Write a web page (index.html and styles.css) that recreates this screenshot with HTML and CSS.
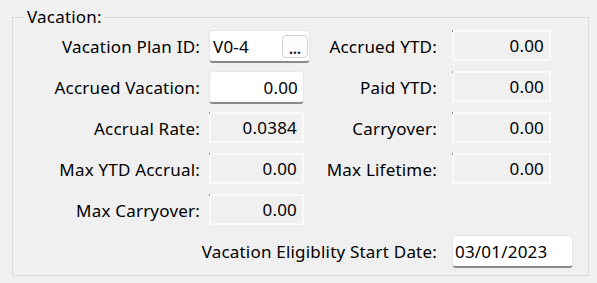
FILE: index.html
```html
<!DOCTYPE html>
<html lang="en">
<head>
    <meta charset="UTF-8" />
    <title>Vacation</title>
    <link rel="stylesheet" href="styles.css">
</head>
<body>
<fieldset class="group">
    <legend>Vacation:</legend>
    <div class="grid">
        <label class="lbl">Vacation Plan ID:</label>
        <div class="edit plan">
            <span>V0-4</span>
            <button class="dots" type="button">...</button>
        </div>
        <label class="lbl right">Accrued YTD:</label>
        <div class="ro">0.00</div>

        <label class="lbl">Accrued Vacation:</label>
        <div class="edit num">0.00</div>
        <label class="lbl right">Paid YTD:</label>
        <div class="ro">0.00</div>

        <label class="lbl">Accrual Rate:</label>
        <div class="ro">0.0384</div>
        <label class="lbl right">Carryover:</label>
        <div class="ro">0.00</div>

        <label class="lbl">Max YTD Accrual:</label>
        <div class="ro">0.00</div>
        <label class="lbl right">Max Lifetime:</label>
        <div class="ro">0.00</div>

        <label class="lbl">Max Carryover:</label>
        <div class="ro">0.00</div>
        <div></div>
        <div></div>

        <label class="lbl right wide">Vacation Eligiblity Start Date:</label>
        <div class="edit date">03/01/2023</div>
    </div>
</fieldset>
</body>
</html>
```

FILE: styles.css
```css
* {
    box-sizing: border-box;
}

body {
    margin: 0;
    background: #f0f0f0;
    font-family: 'Noto Sans', 'Open Sans', sans-serif;
    font-size: 17px;
    letter-spacing: 0.2px;
    color: #000;
}

.group {
    margin: 5px 0 0 12px;
    width: 577px;
    height: 271px;
    padding: 0;
    border: 1px solid #dcdcdc;
    border-radius: 0;
}

.group legend {
    margin-left: 11px;
    padding: 0 2px 0 3px;
    line-height: 24px;
}

.grid {
    display: grid;
    grid-template-columns: 187px 100px 125px 99px;
    grid-auto-rows: 32px;
    column-gap: 9px;
    row-gap: 9px;
    margin-top: 1px;
}

.lbl {
    display: flex;
    align-items: center;
    justify-content: flex-end;
    white-space: nowrap;
}

.lbl.right {
    padding-right: 6px;
}

.lbl.wide {
    grid-column: 1 / 4;
}

/* editable text boxes */
.edit {
    display: flex;
    align-items: center;
    background: #fff;
    border: 1px solid #e6e6e6;
    border-bottom: 2px solid #8a8a8a;
    border-radius: 4px;
    height: 33px;
}

.edit.num {
    justify-content: flex-end;
    width: 95px;
    padding-right: 5px;
}

.plan {
    width: 101px;
    padding-left: 3px;
    justify-content: space-between;
    padding-right: 1px;
}

.date {
    width: 121px;
    padding-left: 2px;
}

.dots {
    display: flex;
    align-items: flex-end;
    justify-content: center;
    width: 26px;
    height: 23px;
    padding: 0 0 3px;
    margin-top: 1px;
    border: 1px solid #d0d0d0;
    border-radius: 4px;
    background: #fdfdfd;
    font-family: inherit;
    font-size: 14px;
    line-height: 10px;
    font-weight: 700;
    color: #222;
    letter-spacing: 0;
}

/* read-only boxes */
.ro {
    position: relative;
    display: flex;
    align-items: center;
    justify-content: flex-end;
    padding-right: 5px;
    width: 95px;
    height: 31px;
    border: 2px solid #fafafa;
    background: #f0f0f0;
}

.ro::before {
    content: '';
    position: absolute;
    left: -2px;
    top: -2px;
    width: 1px;
    height: 2px;
    background: #9a9a9a;
}

.grid > .ro:nth-child(4n) {
    width: 99px;
}
```
